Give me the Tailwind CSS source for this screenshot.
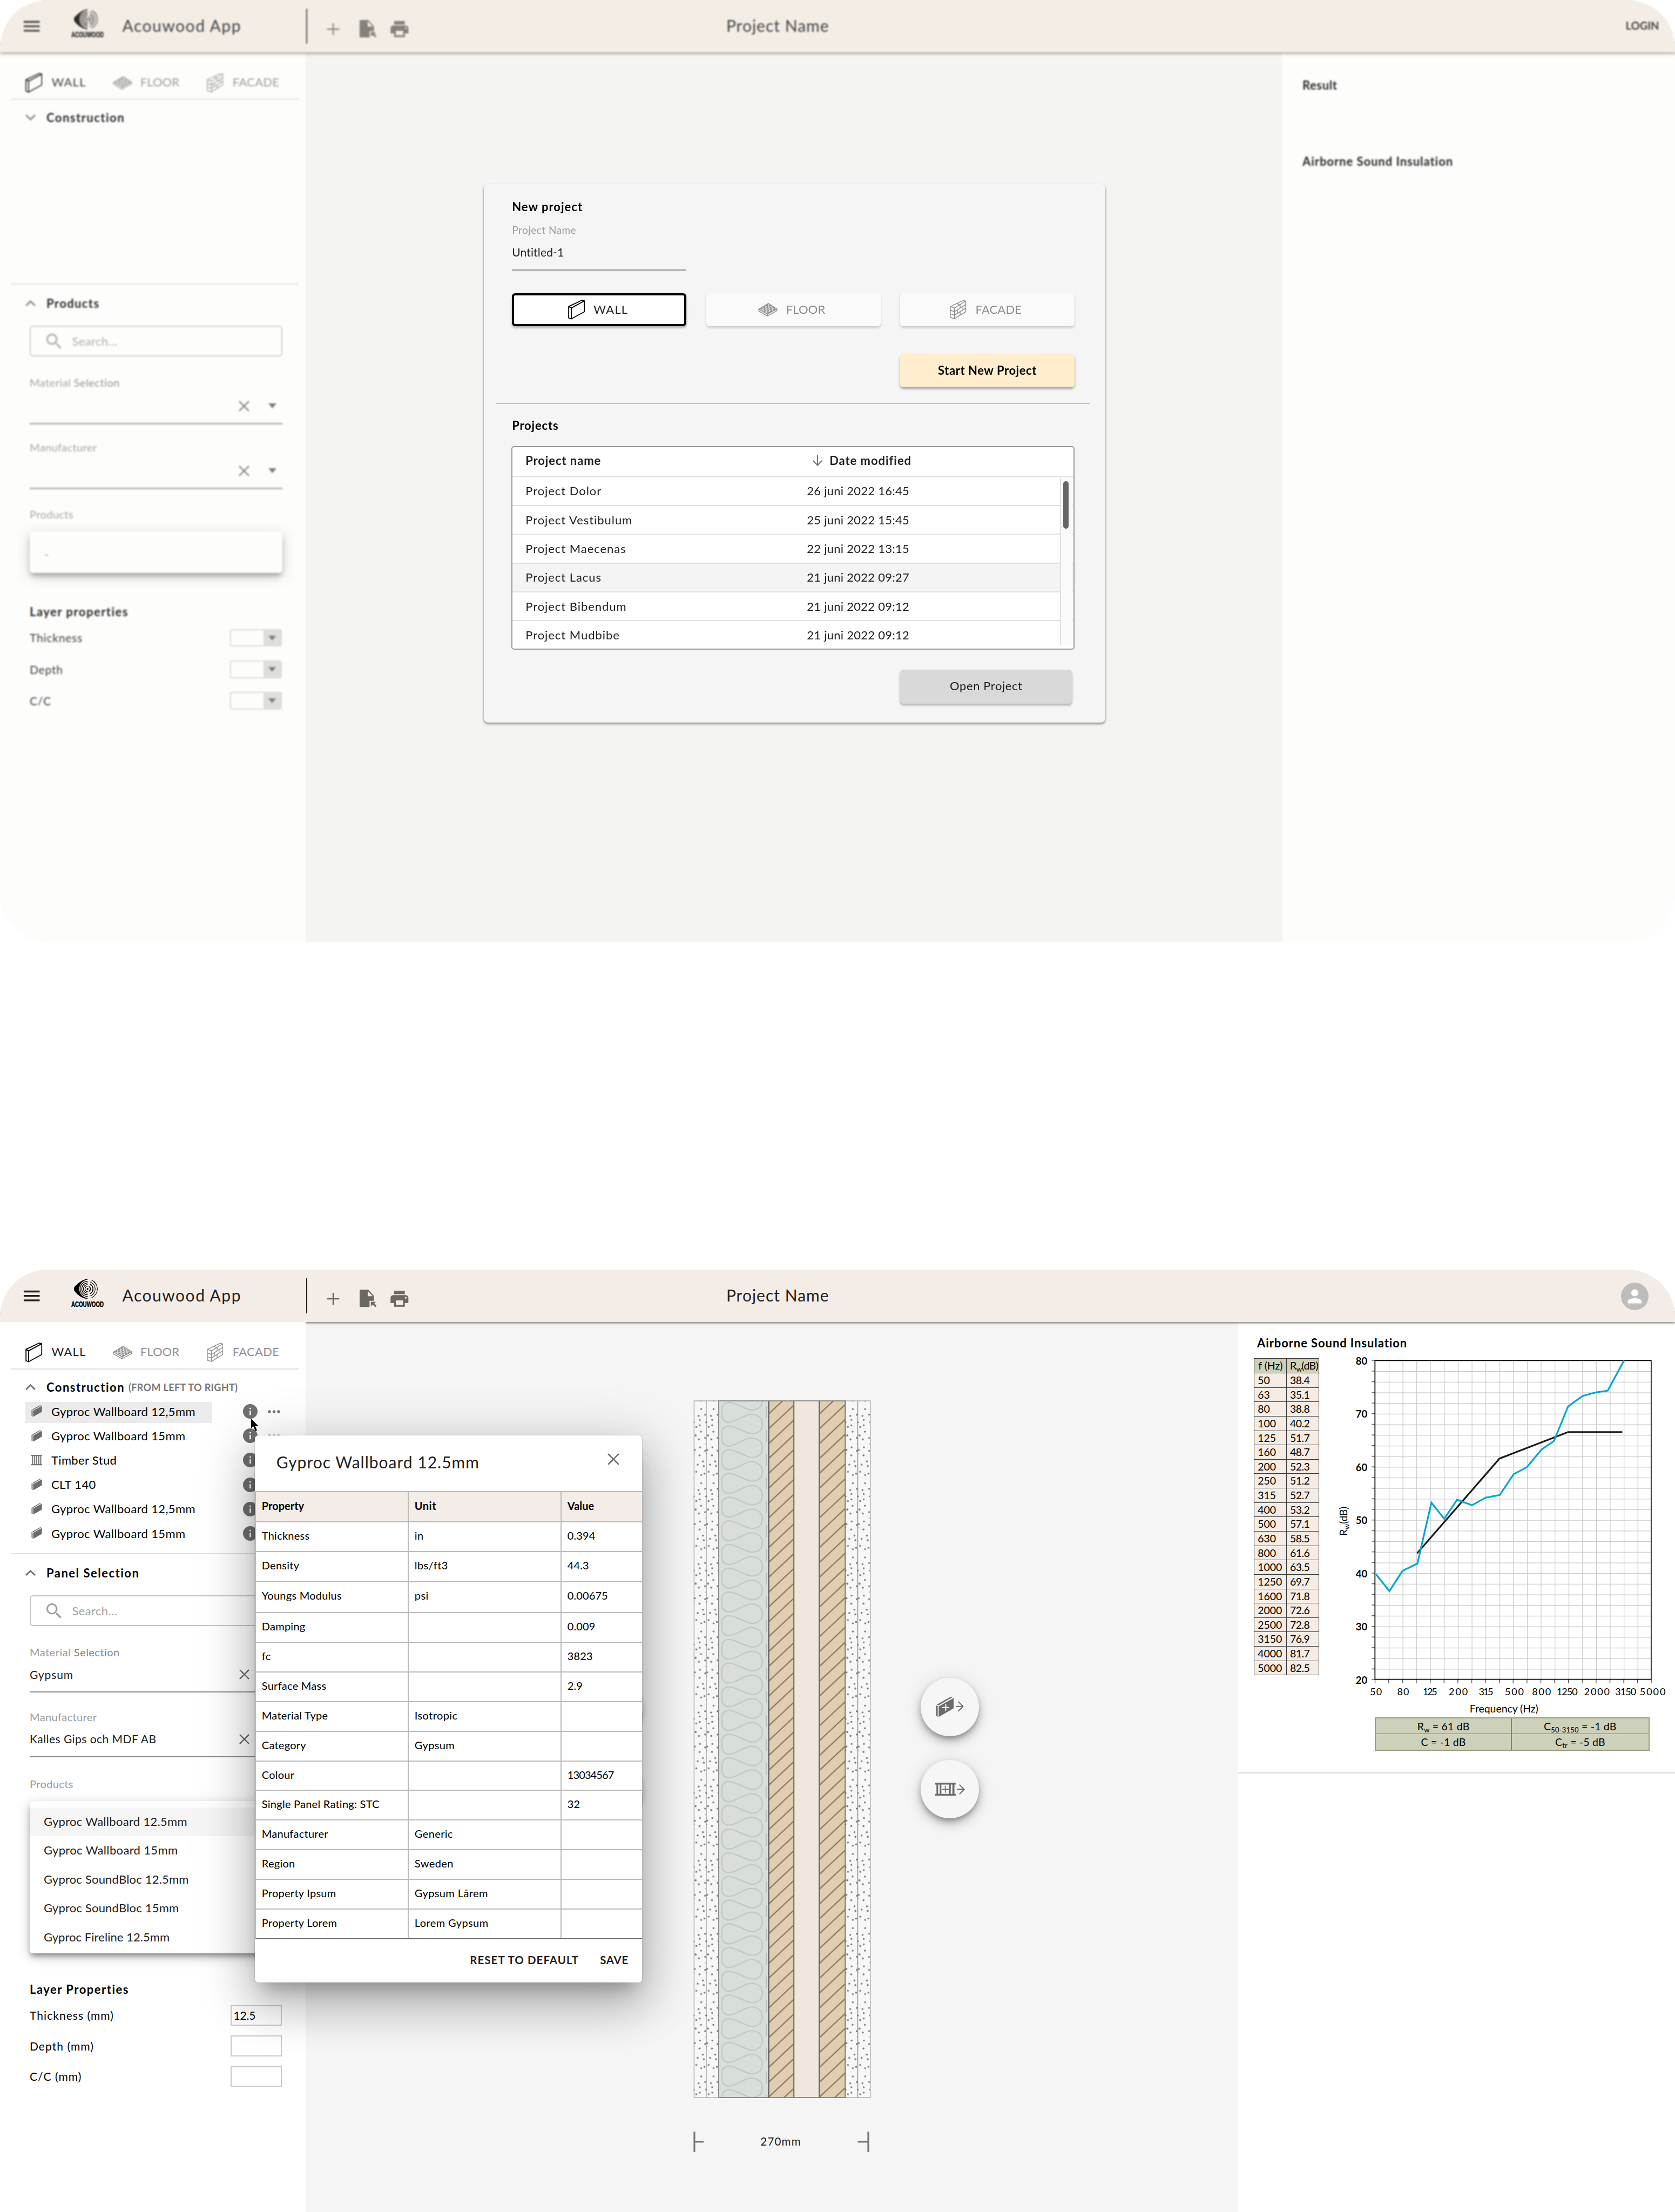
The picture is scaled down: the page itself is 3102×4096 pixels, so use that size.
<!DOCTYPE html>
<html lang="en">
<head>
<meta charset="utf-8">
<title>Acouwood App</title>
<script src="https://cdn.jsdelivr.net/npm/@tailwindcss/browser@4"></script>
</head>
<body class="w-[3102px] h-[4096px] overflow-hidden bg-white font-['Lato','Noto_Sans',sans-serif] text-[#212121]">

<!-- Shared icons -->
<svg class="absolute w-0 h-0" aria-hidden="true">
  <defs>
    <symbol id="menu" viewBox="0 0 24 24"><path fill="currentColor" d="M3 18h18v-2H3v2zm0-5h18v-2H3v2zm0-7v2h18V6H3z"/></symbol>
    <symbol id="print" viewBox="0 0 24 24"><path fill="currentColor" d="M19 8H5c-1.66 0-3 1.34-3 3v6h4v4h12v-4h4v-6c0-1.66-1.34-3-3-3zm-3 11H8v-5h8v5zm3-7c-.55 0-1-.45-1-1s.45-1 1-1 1 .45 1 1-.45 1-1 1zm-1-9H6v4h12V3z"/></symbol>
    <symbol id="plus" viewBox="0 0 24 22"><path fill="none" stroke="currentColor" stroke-width="2.4" d="M.6 11h22.8M12 0v22"/></symbol>
    <symbol id="file" viewBox="0 0 65 75" preserveAspectRatio="none">
      <path fill="currentColor" d="M5 0H33L55 27V48H38V75H5Q0 75 0 69V6Q0 0 5 0ZM31 5V28H50Z" fill-rule="evenodd"/>
      <path fill="currentColor" d="M43 52H62L56.500 58.500L65 69L60.500 75L50.500 64L43 71Z"/>
    </symbol>
    <symbol id="search" viewBox="0 0 24 24"><path fill="currentColor" d="M15.500 14h-.79l-.28-.27A6.471 6.471 0 0 0 16 9.500 6.500 6.500 0 1 0 9.500 16c1.610 0 3.090-.59 4.230-1.570l.27.28v.79l5 4.990L20.490 19l-4.990-5zm-6 0C7.010 14 5 11.990 5 9.500S7.010 5 9.500 5 14 7.010 14 9.500 11.990 14 9.500 14z"/></symbol>
    <symbol id="info" viewBox="2 2 20 20"><path fill="currentColor" d="M12 2C6.480 2 2 6.480 2 12s4.480 10 10 10 10-4.480 10-10S17.520 2 12 2zm1 15h-2v-6h2v6zm0-8h-2V7h2v2z"/></symbol>
    <symbol id="up" viewBox="0 0 19 11"><path fill="none" stroke="currentColor" stroke-width="3" d="M1.200 9.800L9.500 1.900l8.300 7.900"/></symbol>
    <symbol id="down" viewBox="0 0 19 11"><path fill="none" stroke="currentColor" stroke-width="3" d="M1.200 1.200L9.500 9.100l8.300-7.900"/></symbol>
    <symbol id="close" viewBox="0 0 20 20"><path fill="none" stroke="currentColor" stroke-width="2.400" d="M1 1l18 18M19 1L1 19"/></symbol>
    <symbol id="caret" viewBox="0 0 15 9"><path fill="currentColor" d="M0 0h15L7.500 9z"/></symbol>
    <symbol id="dots" viewBox="0 0 23 6"><g fill="currentColor"><circle cx="3" cy="3" r="2.700"/><circle cx="11.500" cy="3" r="2.700"/><circle cx="20" cy="3" r="2.700"/></g></symbol>
    <symbol id="wall" viewBox="0 0 32 38"><path fill="none" stroke="currentColor" stroke-width="1.900" stroke-linejoin="round" d="M1 13L26 1l5 1.200L6 15.800ZM6 15.800L31 2.200V22.800L6 36.500ZM1 13V34.500L6 36.500"/></symbol>
    <symbol id="floor" viewBox="0 0 37 26">
      <path fill="currentColor" fill-opacity=".25" stroke="currentColor" stroke-width="1.500" stroke-linejoin="round" d="M1 12L19.500 1L36 11.500L17.500 21.500Z"/>
      <path fill="none" stroke="currentColor" stroke-width="1.500" stroke-linejoin="round" d="M1 12v3.500L17.500 25L36 15v-3.500M17.500 21.500V25"/>
      <path stroke="currentColor" stroke-width="2.600" stroke-dasharray="4.200 2.200" fill="none" d="M4.500 12L20 2.800M11 16L27 6.500M17.500 19.800L33 11"/>
      <path stroke="currentColor" stroke-width="2.600" stroke-dasharray="4.200 2.200" stroke-dashoffset="3.200" fill="none" d="M7.500 14L23.500 4.500M14 18L30 8.800"/>
    </symbol>
    <symbol id="facade" viewBox="0 0 32 38">
      <g fill="none" stroke="currentColor" stroke-width="1.500" stroke-linejoin="round">
        <path d="M1 13L26 1l5 1.200L9 15.800ZM9 15.800L31 2.200V22.800L9 36.500ZM1 13V34L9 36.500"/>
        <path d="M1 20L9 22.700L31 9M1 27L9 29.600L31 16"/>
        <path d="M20 9v6.900M14.500 19.200v6.900M25.500 12.400v6.900M20 22.800v6.900M13.500 7l5.500 2.500"/>
      </g>
    </symbol>
    <symbol id="panel" viewBox="0 0 132 148"><path fill="currentColor" d="M8 56L110 0L122 4L18 63ZM0 61L14 69V148L0 135ZM21 70L132 9V84L21 148Z"/></symbol>
    <symbol id="stud" viewBox="0 0 20 19"><path fill="none" stroke="currentColor" stroke-width="1.900" d="M0 1h20M0 18h20M2.500 1v17M6.300 1v17M10.100 1v17M13.900 1v17M17.500 1v17"/></symbol>
    <symbol id="logo" viewBox="0 0 60 52">
      <path fill="currentColor" d="M30 0C22 1 13 7 5.500 15.500Q4.500 18.700 5.500 22C12 31 21 36.500 30 37.400V35.600A17 17 0 0 1 30 1.800Z"/>
      <g fill="none" stroke="currentColor">
        <path stroke-width="1.300" d="M30.400 4.700a14 14 0 0 0 0 28M30.400 7.700a11 11 0 0 0 0 22M30.400 10.700a8 8 0 0 0 0 16M30.400 13.700a5 5 0 0 0 0 10"/>
        <path stroke-width="1.100" d="M37.500 2.200a18 18 0 0 1 0 33M34 5.200a14 14 0 0 1 0 27"/>
        <path stroke-width="1.600" d="M34.500 9.700a10 10 0 0 1 0 18M32.500 14a5.300 5.300 0 0 1 0 9.400"/>
      </g>
      <circle cx="30.200" cy="18.700" r="1.700" fill="currentColor"/>
      <text x="0" y="51.500" textLength="60" lengthAdjust="spacingAndGlyphs" font-family="Liberation Sans, sans-serif" font-weight="700" font-size="14.500" stroke="currentColor" stroke-width=".5" fill="currentColor">ACOUWOOD</text>
    </symbol>
  </defs>
</svg>

<!-- ============ Start screen ============ -->
<section class="relative h-[1744px] overflow-hidden rounded-[88px] bg-[#f5f5f5]">
  <header class="relative z-10 flex h-[97px] items-center bg-[#f4ece4] shadow-[0_2px_5px_rgba(0,0,0,0.5)]">
    <div class="flex w-[567px] items-center pl-[38.6px]">
      <svg class="size-[39.4px]"><use href="#menu"/></svg>
      <svg class="mb-[11px] ml-[53.9px] h-[52px] w-[60px] text-black"><use href="#logo"/></svg>
      <span class="mb-[4px] ml-[34.700px] text-[30px] leading-9 tracking-[1.5px] whitespace-nowrap">Acouwood App</span>
    </div>
    <div class="h-[65px] w-[2px] bg-[#212121]"></div>
    <svg class="mt-[10px] ml-[36px] h-[22px] w-[24px] text-[#6b6860]"><use href="#plus"/></svg>
    <svg class="mt-[10px] ml-[36.600px] h-[32.600px] w-[31.400px] text-[#6b6860]"><use href="#file"/></svg>
    <svg class="mt-[10px] ml-[23.300px] size-[39.600px] text-[#6b6860]"><use href="#print"/></svg>
    <span class="mb-[4px] ml-[585px] text-[30px] leading-9 tracking-[1px]">Project Name</span>
    <span class="mr-[29.500px] mb-[3px] ml-auto text-[20px] font-bold">LOGIN</span>
  </header>

  <div class="flex h-[1647px]">
    <aside class="w-[566px] bg-white">
      <nav class="mr-[13px] ml-[20px] flex h-[88px] items-center border-b-2 border-[#e0e0e0] pt-[22px] pl-[27px] text-[22px]">
        <div class="flex w-[161.700px] items-center gap-[17px]"><svg class="mt-[4px] h-[37px] w-[31.500px] text-black"><use href="#wall"/></svg><span class="tracking-[1.17px]">WALL</span></div>
        <div class="flex w-[174.500px] items-center gap-[15px] text-[#8f8f8f]"><svg class="mt-[4px] h-[25px] w-[36px]"><use href="#floor"/></svg><span class="tracking-[0.1px]">FLOOR</span></div>
        <div class="flex items-center gap-[17px] text-[#8f8f8f]"><svg class="mt-[4px] h-[37px] w-[30.500px]"><use href="#facade"/></svg><span class="tracking-[0.3px]">FACADE</span></div>
      </nav>
      <div class="mr-[13px] ml-[20px] h-[342px] border-b-2 border-[#e0e0e0] pt-[13px] pl-[27px]">
        <div class="flex h-[40px] items-center gap-[20px] pb-[1px] text-[22px] font-bold tracking-[1.48px] text-black"><svg class="h-[11px] w-[19px] text-[#757575]"><use href="#down"/></svg>Construction</div>
      </div>
      <div class="pr-[43px] pl-[55px]">
        <div class="mt-[14.400px] -ml-[8px] flex h-[40px] items-center gap-[20px] text-[22px] font-bold tracking-[1.4px] text-black"><svg class="h-[11px] w-[19px] text-[#757575]"><use href="#up"/></svg>Products</div>
        <div class="mt-[21.600px] flex h-[57.500px] items-center rounded-[6px] border-2 border-[#c4c4c4] pl-[24px] text-[22px] text-[#a3a3a3]"><svg class="size-[38.400px]"><use href="#search"/></svg><span class="ml-[14px] tracking-[0.4px]">Search...</span></div>

        <div class="mt-[36px] h-[24px] text-[20px] leading-[24px] tracking-[0.47px] text-[#9b9b9b]">Material <span class="text-[#858585]">Selection</span></div>
        <div class="flex h-[66px] items-center justify-end gap-[35px] border-b-[3px] border-[#a8a8a8] pr-[11px] text-[#616161]"><svg class="size-[20px]"><use href="#close"/></svg><svg class="h-[9px] w-[15px]"><use href="#caret"/></svg></div>
        <div class="mt-[30px] h-[24px] text-[20px] leading-[24px] tracking-[0.37px] text-[#9b9b9b]">Manufacturer</div>
        <div class="flex h-[66px] items-center justify-end gap-[35px] border-b-[3px] border-[#a8a8a8] pr-[11px] text-[#616161]"><svg class="size-[20px]"><use href="#close"/></svg><svg class="h-[9px] w-[15px]"><use href="#caret"/></svg></div>
        <div class="mt-[33.500px] h-[24px] text-[20px] leading-[24px] tracking-[0.37px] text-[#9b9b9b]">Products</div>
        <div class="mt-[20px] flex h-[77.500px] items-center rounded-[6px] bg-white pt-[8px] pl-[27px] text-[22px] text-[#8a8a8a] shadow-[0_7px_10px_-2px_rgba(0,0,0,0.35),0_6px_24px_rgba(0,0,0,0.22)]">-</div>

        <div class="mt-[51.400px] flex h-[40px] items-center text-[22px] font-bold tracking-[1.5px] text-black">Layer properties</div>
        <div class="mt-[12px] flex flex-col gap-[25.600px] text-[21px] tracking-[0.8px]">
          <div class="flex h-[32.600px] items-center justify-between"><span>Thickness</span><span class="mr-[1px] flex h-full w-[96px] justify-end rounded-[4px] border-2 border-[#d5d5d5]"><span class="flex w-[32px] items-center justify-center bg-[#d9d9d9] text-[#616161]"><svg class="h-[9px] w-[14px]"><use href="#caret"/></svg></span></span></div>
          <div class="flex h-[32.600px] items-center justify-between"><span>Depth</span><span class="mr-[1px] flex h-full w-[96px] justify-end rounded-[4px] border-2 border-[#d5d5d5]"><span class="flex w-[32px] items-center justify-center bg-[#d9d9d9] text-[#616161]"><svg class="h-[9px] w-[14px]"><use href="#caret"/></svg></span></span></div>
          <div class="flex h-[32.600px] items-center justify-between"><span>C/C</span><span class="mr-[1px] flex h-full w-[96px] justify-end rounded-[4px] border-2 border-[#d5d5d5]"><span class="flex w-[32px] items-center justify-center bg-[#d9d9d9] text-[#616161]"><svg class="h-[9px] w-[14px]"><use href="#caret"/></svg></span></span></div>
        </div>
      </div>
    </aside>
    <main class="flex-1"></main>
    <aside class="w-[727px] bg-white pt-[45.500px] pl-[37px] text-[22px] font-bold text-black">
      <div class="h-[30px] leading-[30px] tracking-[0.6px]">Result</div>
      <div class="mt-[111px] h-[30px] leading-[30px] tracking-[0.95px]">Airborne Sound Insulation</div>
    </aside>
  </div>

  <!-- Modal backdrop -->
  <div class="absolute inset-0 z-20 bg-[#f5f5ef]/18 backdrop-blur-[1.5px]"></div>

  <!-- New / open project dialog -->
  <div class="absolute top-[340.500px] left-[896.400px] z-30 h-[997px] w-[1150.600px] rounded-[8px] bg-[#f5f5f5] pr-[57px] pl-[51.800px] shadow-[0_3px_4px_rgba(0,0,0,0.35),0_1px_3px_rgba(0,0,0,0.2)]">
    <div class="pt-[27.300px] text-[22px] leading-[30px] font-bold tracking-[1px] text-black">New project</div>
    <div class="mt-[15.800px] text-[19px] leading-[24px] tracking-[0.48px] text-[#9b9b9b]">Project Name</div>
    <div class="flex h-[63.100px] w-[323px] items-center border-b-2 border-[#8c8c8c] pb-[3px] text-[21px] tracking-[0.16px]">Untitled-1</div>

    <div class="mt-[42.300px] flex h-[61.200px] gap-[36.700px] text-[22px]">
      <div class="flex w-[323px] items-center justify-center gap-[16px] rounded-[6px] border-4 border-black bg-white pr-[4px] pb-[2px] shadow-[0_3px_4px_rgba(0,0,0,0.3)]"><svg class="mt-[2px] h-[37px] w-[31.500px] text-black"><use href="#wall"/></svg><span class="tracking-[1.17px]">WALL</span></div>
      <div class="flex w-[323px] items-center justify-center gap-[16px] rounded-[6px] bg-[#fafafa] pr-[6px] pb-[2px] text-[#8c8c8c] shadow-[0_3px_4px_rgba(0,0,0,0.18)]"><svg class="mt-[2px] h-[25px] w-[36px]"><use href="#floor"/></svg><span class="tracking-[0.1px]">FLOOR</span></div>
      <div class="flex w-[323px] items-center justify-center gap-[17px] rounded-[6px] bg-[#fafafa] pr-[6px] pb-[2px] text-[#8c8c8c] shadow-[0_3px_4px_rgba(0,0,0,0.18)]"><svg class="mt-[2px] h-[37px] w-[30.500px]"><use href="#facade"/></svg><span class="tracking-[0.14px]">FACADE</span></div>
    </div>
    <div class="mt-[52.100px] ml-auto flex h-[60.800px] w-[323px] items-center justify-center rounded-[6px] bg-[#ffedcd] pb-[3px] text-[22px] font-bold tracking-[0.55px] text-black shadow-[0_3px_4px_rgba(0,0,0,0.35)]">Start New Project</div>
    <div class="mt-[29.100px] -mr-[28.500px] -ml-[30.200px] h-[2px] bg-[#c2c2c2]"></div>

    <div class="mt-[24.900px] text-[22px] leading-[30px] font-bold tracking-[0.8px] text-black">Projects</div>
    <div class="relative mt-[22.800px] -ml-[1px] h-[376.700px] overflow-hidden rounded-[5px] border-2 border-[#999] bg-white text-[22px]">
      <div class="flex h-[56px] items-center border-b-2 border-[#e0e0e0] pb-[4px] pl-[24px] font-bold">
        <span class="w-[531px] tracking-[0.9px]">Project name</span>
        <svg class="h-[20px] w-[20px] text-[#757575]" viewBox="0 0 20 20"><path d="M10 0V18M1.500 10L10 18.500L18.500 10" fill="none" stroke="currentColor" stroke-width="2.200"/></svg>
        <span class="ml-[12px] tracking-[0.95px]">Date modified</span>
      </div>
      <div id="projects"></div>
      <div class="absolute top-[57px] right-[2px] h-[310px] w-[23px] border-l-2 border-[#e0e0e0] bg-[#fafafa] pt-[6px] pl-[4px]"><div class="h-[88px] w-[10px] rounded-full bg-[#666]"></div></div>
    </div>
    <div class="mt-[37.900px] mr-[4.500px] ml-auto flex h-[62.200px] w-[318.300px] items-center justify-center rounded-[6px] bg-[#d9d9d9] pb-[4px] text-[22px] tracking-[0.58px] shadow-[0_3px_4px_rgba(0,0,0,0.3)]">Open Project</div>
  </div>
</section>

<!-- ============ Editor screen ============ -->
<section class="relative mt-[607px] h-[1745px] overflow-hidden rounded-t-[88px] bg-[#f5f5f5]">
  <header class="relative z-10 flex h-[97px] items-center bg-[#f4ece6] shadow-[0_2px_4px_rgba(0,0,0,0.5)]">
    <div class="flex w-[567px] items-center pl-[38.600px]">
      <svg class="size-[39.400px]"><use href="#menu"/></svg>
      <svg class="mb-[11px] ml-[53.900px] h-[52px] w-[60px] text-black"><use href="#logo"/></svg>
      <span class="mb-[4px] ml-[34.700px] text-[30px] leading-9 tracking-[1.5px] whitespace-nowrap">Acouwood App</span>
    </div>
    <div class="h-[65px] w-[2px] bg-[#212121]"></div>
    <svg class="mt-[10px] ml-[36px] h-[22px] w-[24px] text-[#6b6860]"><use href="#plus"/></svg>
    <svg class="mt-[10px] ml-[36.600px] h-[32.600px] w-[31.400px] text-[#6b6860]"><use href="#file"/></svg>
    <svg class="mt-[10px] ml-[23.300px] size-[39.600px] text-[#6b6860]"><use href="#print"/></svg>
    <span class="mb-[4px] ml-[585px] text-[30px] leading-9 tracking-[1px]">Project Name</span>
    <span class="mt-[2px] mr-[48.800px] ml-auto flex size-[51.400px] items-center justify-center rounded-full bg-[#bdbdbd] text-white"><svg class="size-[39px]" viewBox="0 0 24 24"><path fill="currentColor" d="M12 12c2.210 0 4-1.790 4-4s-1.790-4-4-4-4 1.790-4 4 1.790 4 4 4zm0 2c-2.670 0-8 1.340-8 4v2h16v-2c0-2.660-5.330-4-8-4z"/></svg></span>
  </header>

  <div class="flex h-[1648px]">
    <aside class="relative z-10 w-[566px] bg-white">
      <nav class="mr-[13px] ml-[20px] flex h-[88px] items-center border-b-2 border-[#e0e0e0] pt-[22px] pl-[27px] text-[22px]">
        <div class="flex w-[161.700px] items-center gap-[17px]"><svg class="mt-[4px] h-[37px] w-[31.500px] text-black"><use href="#wall"/></svg><span class="tracking-[1.17px]">WALL</span></div>
        <div class="flex w-[174.500px] items-center gap-[15px] text-[#8f8f8f]"><svg class="mt-[4px] h-[25px] w-[36px]"><use href="#floor"/></svg><span class="tracking-[0.1px]">FLOOR</span></div>
        <div class="flex items-center gap-[17px] text-[#8f8f8f]"><svg class="mt-[4px] h-[37px] w-[30.500px]"><use href="#facade"/></svg><span class="tracking-[0.3px]">FACADE</span></div>
      </nav>
      <div class="mr-[13px] ml-[20px] h-[342px] border-b-2 border-[#e0e0e0] pt-[13px] pl-[27px]">
        <div class="flex h-[40px] items-center pb-[1px] text-[22px] font-bold tracking-[1.48px] text-black"><svg class="mr-[20px] h-[11px] w-[19px] text-[#757575]"><use href="#up"/></svg>Construction<span class="mt-[2px] ml-[7px] text-[18px] tracking-[0.35px] text-[#757575]">(FROM LEFT TO RIGHT)</span></div>
        <div id="layers" class="mt-[2px] text-[22px] text-black"></div>
      </div>
      <div class="pr-[43px] pl-[55px]">
        <div class="mt-[14.400px] -ml-[8px] flex h-[40px] items-center gap-[20px] text-[22px] font-bold tracking-[1.5px] text-black"><svg class="h-[11px] w-[19px] text-[#757575]"><use href="#up"/></svg>Panel Selection</div>
        <div class="mt-[21.600px] flex h-[57.500px] items-center rounded-[6px] border-2 border-[#c4c4c4] pl-[24px] text-[22px] text-[#a3a3a3]"><svg class="size-[38.400px]"><use href="#search"/></svg><span class="ml-[14px] tracking-[0.4px]">Search...</span></div>

        <div class="mt-[36px] h-[24px] text-[20px] leading-[24px] tracking-[0.47px] text-[#9b9b9b]">Material <span class="text-[#858585]">Selection</span></div>
        <div class="flex h-[62.800px] items-center justify-between border-b-2 border-[#8c8c8c] pr-[61px] pb-[3px] text-[21px]"><span class="tracking-[0.9px]">Gypsum</span><svg class="size-[19px] text-[#616161]"><use href="#close"/></svg></div>
        <div class="mt-[33.200px] h-[24px] text-[20px] leading-[24px] tracking-[0.37px] text-[#9b9b9b]">Manufacturer</div>
        <div class="flex h-[62.200px] items-center justify-between border-b-2 border-[#8c8c8c] pr-[61px] pb-[3px] text-[21px]"><span class="tracking-[0.45px]">Kalles Gips och MDF AB</span><svg class="size-[19px] text-[#616161]"><use href="#close"/></svg></div>
        <div class="mt-[37.300px] h-[24px] text-[20px] leading-[24px] tracking-[0.37px] text-[#9b9b9b]">Products</div>
        <div class="mt-[20px] h-[282.400px] rounded-[6px] bg-white pt-[12px] text-[22px] leading-[52px] shadow-[0_7px_10px_-2px_rgba(0,0,0,0.35),0_6px_24px_rgba(0,0,0,0.22)]">
          <div class="h-[53.400px] bg-[#f5f5f5] pl-[26px] tracking-[0.3px]">Gyproc Wallboard 12.5mm</div>
          <div class="h-[53.400px] pl-[26px] tracking-[0.35px]">Gyproc Wallboard 15mm</div>
          <div class="h-[53.400px] pl-[26px] tracking-[0.2px]">Gyproc SoundBloc 12.5mm</div>
          <div class="h-[53.400px] pl-[26px] tracking-[0.2px]">Gyproc SoundBloc 15mm</div>
          <div class="h-[53.400px] pl-[26px] tracking-[0.05px]">Gyproc Fireline 12.5mm</div>
        </div>

        <div class="mt-[46px] flex h-[40px] items-center text-[22px] font-bold tracking-[1.5px] text-black">Layer Properties</div>
        <div class="mt-[9.400px] flex flex-col gap-[18.200px] text-[21px] tracking-[1.05px] text-black">
          <div class="flex h-[38.300px] items-center justify-between"><span>Thickness (mm)</span><span class="mr-[1.500px] flex h-full w-[95px] items-center border-2 border-[#c9c9c9] pb-[1px] pl-[4px] tracking-[-0.2px]">12.5</span></div>
          <div class="flex h-[38.300px] items-center justify-between"><span>Depth (mm)</span><span class="mr-[1.500px] h-full w-[95px] border-2 border-[#c9c9c9]"></span></div>
          <div class="flex h-[38.300px] items-center justify-between"><span>C/C (mm)</span><span class="mr-[1.500px] h-full w-[95px] border-2 border-[#c9c9c9]"></span></div>
        </div>
      </div>
    </aside>

    <main class="flex-1 pt-[145px] pl-[718px]">
      <div class="flex items-start">
        <!-- Wall section -->
        <svg class="h-[1292px] w-[329px]" viewBox="0 0 329 1292">
          <defs>
            <pattern id="gypsum" x="0" y="0" width="23.400" height="137.300" patternUnits="userSpaceOnUse">
              <g fill="#7a7a7a">
                <circle cx="13.900" cy="0" r="1.700"/><circle cx="13.900" cy="137.300" r="1.700"/><circle cx="13.900" cy="15.200" r="1.700"/><circle cx="9.100" cy="27.800" r="1.800"/><circle cx="21.300" cy="25.600" r="1.800"/><circle cx="11.300" cy="35.200" r="1.700"/><circle cx="0.600" cy="39.600" r="1.600"/><circle cx="22.900" cy="39.600" r="1.600"/><circle cx="11.300" cy="45.200" r="1.700"/><circle cx="4.800" cy="48.300" r="1.800"/><circle cx="13.500" cy="57" r="1.700"/><circle cx="3.500" cy="63.900" r="1.900"/><circle cx="9.600" cy="71.300" r="1.800"/><circle cx="21.300" cy="68.700" r="1.800"/><circle cx="11.700" cy="86" r="1.700"/><circle cx="1.900" cy="90.900" r="1.900"/><circle cx="21.300" cy="92.600" r="1.800"/><circle cx="10.900" cy="100.900" r="1.800"/><circle cx="17" cy="112.200" r="1.800"/><circle cx="7.400" cy="118.200" r="1.800"/><circle cx="18.700" cy="120.800" r="1.800"/><circle cx="4.800" cy="131.300" r="1.800"/><circle cx="20" cy="134.800" r="1.800"/><circle cx="22.600" cy="79.500" r="1"/><circle cx="0.900" cy="97.800" r="1"/>
              </g>
            </pattern>
            <path id="loop" d="M60 24.800C70 24.800 80.500 30 80.500 43S71 60.900 62 60.900C50 60.900 32 46.500 18.700 46.500C12 46.500 5.700 52 5.700 58V71C5.700 78 12 83.500 18.700 83.500C32 83.500 48 68.700 60 68.700"/>
            <pattern id="wool" width="92" height="43.900" patternUnits="userSpaceOnUse">
              <g fill="none" stroke="#c1c7c3" stroke-width="2.300"><use href="#loop"/><use href="#loop" y="-43.900"/></g>
            </pattern>
            <pattern id="timber" width="48" height="27.500" patternUnits="userSpaceOnUse">
              <path d="M-2 26.200L50 -22.500M-2 53.700L50 5M-2 81.200L50 32.500" stroke="#82704f" stroke-width="2" fill="none"/>
            </pattern>
          </defs>
          <g transform="translate(.7 1)">
            <rect width="46.500" height="1290" fill="#f7f7f7"/><rect x="280" width="47" height="1290" fill="#f7f7f7"/>
            <rect width="23.400" height="1290" fill="url(#gypsum)"/>
            <rect width="23.400" height="1290" fill="url(#gypsum)" transform="translate(22.900 0)"/>
            <rect width="23.400" height="1290" fill="url(#gypsum)" transform="translate(280.800 0)"/>
            <rect width="23.400" height="1290" fill="url(#gypsum)" transform="translate(303.600 0)"/>
            <path d="M.7 0H46.500V1290H.7ZM280.500 0H327V1290H280.500Z" fill="none" stroke="#adadad" stroke-width="1.500"/>
            <path d="M23.100 0V1290M303.900 0V1290" stroke="#8a8a8a" stroke-width="1.400"/>
            <rect x="46.500" width="92" height="1290" fill="#d9dedb"/>
            <rect width="92" height="1290" fill="url(#wool)" transform="translate(46.500 0)"/>
            <path d="M134.800 10V1290" stroke="#b9c2bd" stroke-width="2.500" stroke-dasharray="22 22"/>
            <rect x="138.700" width="47" height="1290" fill="#e1cdb2"/>
            <rect width="47" height="1290" fill="url(#timber)" transform="translate(138.700 0)"/>
            <rect x="185.500" width="47.500" height="1290" fill="#f1e7df"/>
            <rect x="232.700" width="48" height="1290" fill="#e1cdb2"/>
            <rect width="48" height="1290" fill="url(#timber)" transform="translate(232.700 0)"/>
            <path d="M46.500 0H280.500V1290H46.500Z" fill="none" stroke="#6e6e6e" stroke-width="1.600"/>
            <path d="M138.700 0V1290M232.700 0V1290" stroke="#6b6b6b" stroke-width="2.800"/>
            <path d="M185.500 0V1290" stroke="#77756c" stroke-width="2.200"/>
          </g>
        </svg>
        <div class="mt-[513.500px] ml-[91.500px] flex flex-col gap-[43.500px] text-[#6b6b6b]">
          <div class="flex size-[108.500px] items-center justify-center rounded-full bg-[#f6f6f6] shadow-[0_6px_11px_-2px_rgba(0,0,0,0.35),0_11px_20px_rgba(0,0,0,0.16),0_2px_36px_rgba(0,0,0,0.1)]">
            <svg class="h-[37.400px] w-[51.500px]" viewBox="0 0 204 148"><use href="#panel" width="132" height="148"/><path d="M50 78H96M73 55V101" stroke="#f6f6f6" stroke-width="8" stroke-linecap="round"/><path d="M153 70H200M169 37L202 70L169 104" transform="translate(-2 0)" stroke="currentColor" stroke-width="8" stroke-linecap="round" stroke-linejoin="round" fill="none"/></svg>
          </div>
          <div class="flex size-[108.500px] items-center justify-center rounded-full bg-[#f6f6f6] shadow-[0_6px_11px_-2px_rgba(0,0,0,0.35),0_11px_20px_rgba(0,0,0,0.16),0_2px_36px_rgba(0,0,0,0.1)]">
            <svg class="ml-[2px] h-[24.500px] w-[55px]" viewBox="0 0 218 97"><path fill="currentColor" d="M0 0H150V14H141V82H150V97H0V82H9V14H0ZM21 14V82H33V14ZM45 14V82H101V14ZM114 14V82H126V14Z" fill-rule="evenodd"/><path d="M54 49H96M74 27V71" stroke="currentColor" stroke-width="7" stroke-linecap="round"/><path d="M163 49H212M180 17L213 49L180 82" stroke="currentColor" stroke-width="8" stroke-linecap="round" stroke-linejoin="round" fill="none"/></svg>
          </div>
        </div>
      </div>
      <div class="mt-[62px] flex h-[38px] w-[328px] items-center justify-between">
        <svg class="h-[38px] w-[20px]" viewBox="0 0 20 38"><path d="M2 1.500V36.500M2 19H18" stroke="#757575" stroke-width="3.200" stroke-linecap="round"/></svg>
        <span class="mb-[2px] text-[20.500px] tracking-[1.2px]">270mm</span>
        <svg class="mr-[2px] h-[38px] w-[22px]" viewBox="0 0 22 38"><path d="M20 1.500V36.500M20 19H2" stroke="#757575" stroke-width="3.200" stroke-linecap="round"/></svg>
      </div>
    </main>

    <aside class="w-[809.500px] bg-white">
      <div class="h-[836px] border-b-2 border-[#dcdcdc] pt-[23.500px]">
        <h2 class="pl-[35.500px] text-[22px] leading-[30px] font-bold tracking-[0.91px] text-black">Airborne Sound Insulation</h2>
        <div class="mt-[13.800px] flex items-start pl-[29.700px]">
          <div id="bands" class="grid w-[121px] grid-cols-2 border-t-[1.500px] border-l-[1.500px] border-[#3c3c3c] bg-[#f4ece5] text-[19.500px] leading-[25px] text-black"></div>
          <svg class="ml-[27px] h-[664.900px] w-[632px] overflow-visible text-[19.500px]" viewBox="0 15.300 632 664.900">
            <defs>
              <pattern id="grid" x="76.300" y="19.600" width="25.600" height="19.690" patternUnits="userSpaceOnUse"><path d="M0 0H25.600M0 0V19.690" stroke="#c9c9c9" stroke-width="2.400" fill="none"/></pattern>
              <pattern id="yticks" x="70.300" y="18.900" width="6" height="19.690" patternUnits="userSpaceOnUse"><path d="M0 .7H6" stroke="#444" stroke-width="1.300"/></pattern>
              <pattern id="xticks" x="75.600" y="610" width="25.600" height="10" patternUnits="userSpaceOnUse"><path d="M.7 0V10" stroke="#444" stroke-width="1.300"/></pattern>
            </defs>
            <rect x="76.300" y="19.600" width="512" height="590.700" fill="url(#grid)"/>
            <rect x="70.300" y="18.900" width="6" height="592.400" fill="url(#yticks)"/>
            <rect x="75.600" y="610.300" width="514" height="6.700" fill="url(#xticks)"/>
            <rect x="76.300" y="19.600" width="511.600" height="590.300" fill="none" stroke="#000" stroke-width="1.700"/>
            <polyline points="154.400,376.600 306.900,201.200 433.900,152.100 534.500,152.100" fill="none" stroke="#1c1c1c" stroke-width="3.200"/>
            <polyline points="78.200,415.200 103.100,446.500 127.400,409.100 154.900,395.600 180.900,282.700 204.700,312.800 228.500,277.200 256,287.600 281.400,273.500 307.400,268.600 333.300,230 357.700,217.100 384.700,184.600 407.900,168.600 433.900,104.800 460.900,85.200 485.800,78.500 507.500,75.400 537.600,19.600" fill="none" stroke="#00a7cf" stroke-width="3.200"/>
            <g font-weight="700" font-size="18.500" text-anchor="end" fill="#000"><text x="62.300" y="27.100">80</text><text x="62.300" y="125.500">70</text><text x="62.300" y="224">60</text><text x="62.300" y="322.500">50</text><text x="62.300" y="420.900">40</text><text x="62.300" y="519.400">30</text><text x="62.300" y="618">20</text></g>
            <g font-size="18" text-anchor="middle" fill="#000">
              <text x="78.200" y="639.700" textLength="22">50</text><text x="128.500" y="639.700" textLength="22">80</text><text x="178.200" y="639.700" textLength="27">125</text><text x="230.600" y="639.700" textLength="35">200</text><text x="282" y="639.700" textLength="27">315</text><text x="334.400" y="639.700" textLength="35">500</text><text x="384.700" y="639.700" textLength="35">800</text><text x="432.300" y="639.700" textLength="39">1250</text><text x="487.300" y="639.700" textLength="47.500">2000</text><text x="540.800" y="639.700" textLength="39">3150</text><text x="590.600" y="639.700" textLength="47.500">5000</text>
              <text x="315.300" y="671" font-size="19.500" textLength="127">Frequency (Hz)</text>
              <text transform="translate(25.200 317) rotate(-90)" font-size="19" textLength="54">R<tspan font-size="13" dy="4">w</tspan><tspan dy="-4">(dB)</tspan></text>
            </g>
          </svg>
        </div>
        <div class="ml-[253.500px] grid h-[61.800px] w-[508.500px] grid-cols-2 grid-rows-2 border-2 border-[#979c80] bg-[#ced1ba] text-center text-[19.500px] leading-[29px] text-black">
          <div class="border-r-2 border-b-[1.500px] border-[#7f846a] tracking-[0.2px]">R<span class="relative top-[4px] text-[13px]">w</span> = 61 dB</div>
          <div class="border-b-[1.500px] border-[#7f846a] tracking-[0.2px]">C<span class="relative top-[4px] text-[13px]">50-3150</span> = -1 dB</div>
          <div class="border-r-2 border-[#7f846a] tracking-[0.2px]">C = -1 dB</div>
          <div class="tracking-[0.2px]">C<span class="relative top-[4px] text-[13px]">tr</span> = -5 dB</div>
        </div>
      </div>
    </aside>
  </div>

  <!-- Buttons behind the material sheet -->
  <div class="absolute top-[755.500px] left-[1082.500px] z-10 size-[108.500px] rounded-full bg-[#f6f6f6] shadow-[0_6px_11px_-2px_rgba(0,0,0,0.35)]"></div>
  <div class="absolute top-[907.500px] left-[1082.500px] z-10 size-[108.500px] rounded-full bg-[#f6f6f6] shadow-[0_6px_11px_-2px_rgba(0,0,0,0.35)]"></div>

  <!-- Material sheet -->
  <div class="absolute top-[306.700px] left-[471.800px] z-20 flex h-[1013.600px] w-[717.200px] flex-col rounded-[6px] bg-white shadow-[0_24px_32px_-15px_rgba(0,0,0,0.25),0_44px_82px_6px_rgba(0,0,0,0.17),0_19px_99px_17px_rgba(0,0,0,0.14),0_0_2px_rgba(0,0,0,0.35)]">
    <div class="flex h-[103px] justify-between pr-[42px] pl-[40px]">
      <span class="mt-[31.500px] text-[30px] leading-9 tracking-[1px]">Gyproc Wallboard 12.5mm</span>
      <svg class="mt-[33px] size-[22px] text-[#6b6b6b]"><use href="#close"/></svg>
    </div>
    <div id="sheet" class="border-t-2 border-b-2 border-l-2 border-[#bababa] border-b-[#6d6d6d] text-[20px] text-black"></div>
    <div class="flex h-[79px] items-center justify-end gap-[39px] pr-[25px] pb-[3px] text-[20.500px] font-bold tracking-[1.03px]"><span>RESET TO DEFAULT</span><span class="tracking-[0.7px]">SAVE</span></div>
  </div>

  <svg class="absolute top-[275.600px] left-[465px] z-30 h-[23px] w-[14px]" viewBox="0 0 14 23"><path d="M0 0V17.500L4 14L8 22.800L11 21.500L7.500 13.500H13.500Z"/></svg>
</section>

<script>
  const projects = [
    ['Project Dolor', '26 juni 2022 16:45'], ['Project Vestibulum', '25 juni 2022 15:45'], ['Project Maecenas', '22 juni 2022 13:15'],
    ['Project Lacus', '21 juni 2022 09:27'], ['Project Bibendum', '21 juni 2022 09:12'], ['Project Mudbibe', '21 juni 2022 09:12'],
  ];
  document.getElementById('projects').innerHTML = projects.map(([name, date], i) =>
    `<div class="flex h-[53.3px] items-center border-b-2 border-[#e0e0e0] pb-[1px] pl-[24px] ${i === 3 ? 'bg-[#f4f4f4]' : ''}"><span class="w-[521px] tracking-[0.95px]">${name}</span><span class="tracking-[0.27px]">${date}</span></div>`).join('');

  const layers = [['panel', 'Gyproc Wallboard 12,5mm'], ['panel', 'Gyproc Wallboard 15mm'], ['stud', 'Timber Stud'], ['panel', 'CLT 140'], ['panel', 'Gyproc Wallboard 12,5mm'], ['panel', 'Gyproc Wallboard 15mm']];
  document.getElementById('layers').innerHTML = layers.map(([icon, name], i) =>
    `<div class="flex h-[45.2px] items-center pr-[34px]"><div class="flex h-[39px] w-[346px] items-center pl-[11px] ${i === 0 ? 'mt-[4px] bg-[#ebebeb] pb-[5px]' : 'pb-[1px]'}"><svg class="mr-[17px] h-[21.5px] w-[20px] text-[#6b6b6b]"><use href="#${icon}"/></svg><span class="tracking-[0.35px]">${name}</span></div><svg class="ml-auto size-[27px] text-[#707070]"><use href="#info"/></svg><svg class="ml-[19px] h-[6px] w-[23px] text-[#757575]"><use href="#dots"/></svg></div>`).join('');

  const sheet = [['Thickness', 'in', '0.394'], ['Density', 'lbs/ft3', '44.3'], ['Youngs Modulus', 'psi', '0.00675'], ['Damping', '', '0.009'], ['fc', '', '3823'], ['Surface Mass', '', '2.9'], ['Material Type', 'Isotropic', ''], ['Category', 'Gypsum', ''], ['Colour', '', '13034567'], ['Single Panel Rating: STC', '', '32'], ['Manufacturer', 'Generic', ''], ['Region', 'Sweden', ''], ['Property Ipsum', 'Gypsum Lårem', ''], ['Property Lorem', 'Lorem Gypsum', '']];
  const height = i => i === 1 ? 56.8 : i === 2 ? 56.4 : 54.95;
  document.getElementById('sheet').innerHTML =
    `<div class="grid h-[54px] grid-cols-[283px_283px_1fr] bg-[#f4ece6] font-bold leading-[50px]"><span class="border-r-2 border-[#bababa] pl-[11px]">Property</span><span class="border-r-2 border-[#bababa] pl-[11px] tracking-[0.5px]">Unit</span><span class="pl-[11px]">Value</span></div>` +
    sheet.map(([a, b, c], i) =>
      `<div class="grid grid-cols-[283px_283px_1fr] border-t-2 border-[#bababa] leading-[49px]" style="height:${height(i)}px"><span class="border-r-2 border-[#bababa] pl-[11px] tracking-[0.25px]">${a}</span><span class="border-r-2 border-[#bababa] pl-[11px] tracking-[0.4px]">${b}</span><span class="pl-[11px] ${c.length > 7 ? 'tracking-[-0.9px]' : 'tracking-[0.1px]'}">${c}</span></div>`).join('');

  const bands = [[50, '38.4'], [63, '35.1'], [80, '38.8'], [100, '40.2'], [125, '51.7'], [160, '48.7'], [200, '52.3'], [250, '51.2'], [315, '52.7'], [400, '53.2'], [500, '57.1'], [630, '58.5'], [800, '61.6'], [1000, '63.5'], [1250, '69.7'], [1600, '71.8'], [2000, '72.6'], [2500, '72.8'], [3150, '76.9'], [4000, '81.7'], [5000, '82.5']];
  document.getElementById('bands').innerHTML =
    `<span class="h-[26.65px] border-r-[1.5px] border-b-[1.5px] border-[#3c3c3c] bg-[#ced1ba] pl-[7px]">f (Hz)</span><span class="h-[26.65px] border-r-[1.5px] border-b-[1.5px] border-[#3c3c3c] bg-[#ced1ba] pl-[6px] tracking-[-0.6px] whitespace-nowrap">R<span class="relative top-[4px] text-[13px]">w</span>(dB)</span>` +
    bands.map(([f, r]) => `<span class="h-[26.65px] border-r-[1.5px] border-b-[1.5px] border-[#3c3c3c] pl-[6px]">${f}</span><span class="h-[26.65px] border-r-[1.5px] border-b-[1.5px] border-[#3c3c3c] pl-[6px] tracking-[-0.6px]">${r}</span>`).join('');
</script>
</body>
</html>
